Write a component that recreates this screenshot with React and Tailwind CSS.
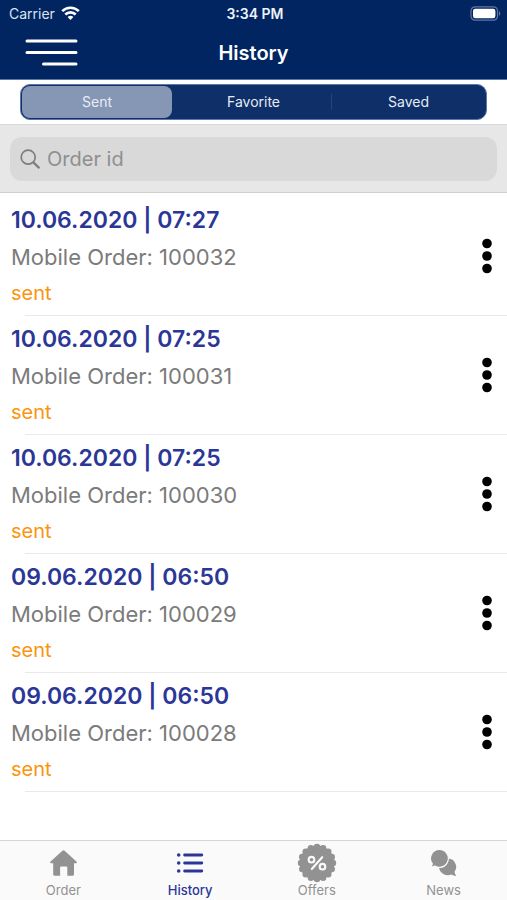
import React, { useState } from "react";

const orders = [
  { id: "100032", date: "10.06.2020", time: "07:27" },
  { id: "100031", date: "10.06.2020", time: "07:25" },
  { id: "100030", date: "10.06.2020", time: "07:25" },
  { id: "100029", date: "09.06.2020", time: "06:50" },
  { id: "100028", date: "09.06.2020", time: "06:50" },
];

function WifiIcon() {
  return (
    <svg className="h-[15px] w-[19px]" viewBox="0 0 19 15" fill="none" stroke="white" strokeWidth="2.6" aria-hidden="true">
      <path d="M1.2 5.2a11.8 11.8 0 0 1 16.6 0" />
      <path d="M4.3 8.5a7.4 7.4 0 0 1 10.4 0" />
      <path d="M9.5 14 6.6 11.1a4.1 4.1 0 0 1 5.8 0Z" fill="white" stroke="none" />
    </svg>
  );
}

function BatteryIcon() {
  return (
    <svg className="h-[15px] w-[31px]" viewBox="0 0 31 15" aria-label="Battery">
      <rect x="1" y="0.8" width="26.5" height="13.4" rx="4" fill="none" stroke="#6378a3" strokeWidth="1.2" />
      <rect x="3" y="2.8" width="22.4" height="9.4" rx="2.2" fill="white" />
      <path d="M29 5.2c1.7.6 1.7 4 0 4.6Z" fill="#6378a3" />
    </svg>
  );
}

function HomeIcon() {
  return (
    <svg className="h-[26px] w-[27px]" viewBox="0 0 27 26" fill="currentColor" aria-hidden="true">
      <path d="M12.4.8a1.600 1.600 0 0 1 2.200 0L26.400 11.600c.8.8.5 1.700-.5 1.700H24v10.900a1.500 1.500 0 0 1-1.500 1.500h-5.200V17.400a.9.9 0 0 0-.9-.9h-5.400a.9.9 0 0 0-.9.9v8.300H4.700a1.500 1.500 0 0 1-1.500-1.500V13.300H1.100c-1 0-1.300-.9-.5-1.700Z" />
    </svg>
  );
}

function ListIcon() {
  return (
    <svg className="h-[22px] w-[28px]" viewBox="0 0 28 22" aria-hidden="true">
      <g stroke="currentColor" strokeWidth="2.8" strokeLinecap="round">
        <path d="M8.600 3h17.200M8.600 11h17.200M8.600 19h17.200" />
      </g>
      <g fill="currentColor">
        <circle cx="2.700" cy="3" r="1.800" />
        <circle cx="2.700" cy="11" r="1.800" />
        <circle cx="2.700" cy="19" r="1.800" />
      </g>
    </svg>
  );
}

const scallops = Array.from({ length: 16 }, (_, i) => {
  const a = (i * Math.PI) / 8;
  return { x: 20 + 16 * Math.cos(a), y: 20 + 16 * Math.sin(a) };
});

function OffersIcon() {
  return (
    <svg className="h-10 w-10" viewBox="0 0 40 40" aria-hidden="true">
      <g fill="currentColor">
        <circle cx="20" cy="20" r="17.4" />
        {scallops.map((s, i) => (
          <circle key={i} cx={s.x} cy={s.y} r="3.2" />
        ))}
      </g>
      <g fill="none" stroke="#fafafa" strokeWidth="2.1" strokeLinecap="round">
        <circle cx="14.500" cy="16.700" r="2.800" />
        <circle cx="25.500" cy="23.700" r="2.800" />
        <path d="M25.200 14.200 14.800 26" />
      </g>
    </svg>
  );
}

function NewsIcon() {
  return (
    <svg className="h-[28px] w-[27px]" viewBox="0 0 27 28" fill="currentColor" aria-hidden="true">
      <path d="M18.2 9.6a8.4 8.4 0 0 1 6.3 13.4c.3 1.6 1 2.8 1.9 4-2-.1-3.6-.7-4.9-1.5a9 9 0 0 1-12.4-6.5c5.2.5 9-3.6 9.1-9.4Z" />
      <path
        d="M9.4.5a8.9 8.9 0 1 1-4.600 16.500C3.700 17.700 2.400 18 .7 18c.8-1 1.400-2 1.600-3.200A8.900 8.900 0 0 1 9.400.5Z"
        stroke="#fafafa"
        strokeWidth="1.2"
      />
    </svg>
  );
}

const tabs = [
  { label: "Order", Icon: HomeIcon },
  { label: "History", Icon: ListIcon },
  { label: "Offers", Icon: OffersIcon },
  { label: "News", Icon: NewsIcon },
];

function Segments() {
  const [active, setActive] = useState("Sent");
  return (
    <div className="border-b border-[#d8d8d8] bg-white px-5 pt-1 pb-1">
      <div className="grid h-9 grid-cols-3 rounded-[10px] border border-[#5d78a8] bg-[#0e2f68]">
        {["Sent", "Favorite", "Saved"].map((name) => (
          <button
            key={name}
            type="button"
            aria-pressed={active === name}
            onClick={() => setActive(name)}
            className={
              "text-sm text-[#e6ebf5] " +
              (active === name
                ? "my-px mr-1 ml-px rounded-lg bg-[#8697b6]"
                : name === "Saved"
                  ? "bg-[linear-gradient(#284577,#284577)] bg-[length:1px_16px] bg-[position:left_center] bg-no-repeat"
                  : "")
            }
          >
            {name}
          </button>
        ))}
      </div>
    </div>
  );
}

function OrderRow({ order }) {
  return (
    <li>
      <div className="flex h-[118px] items-center pr-2 pl-[11px]">
        <div className="min-w-0 flex-1">
          <h2 className="text-[23px] leading-[38px] font-semibold text-[#2b3797]">
            {order.date} | {order.time}
          </h2>
          <p className="text-[22px] leading-9 text-[#7b7b7b]">Mobile Order: {order.id}</p>
          <p className="text-xl leading-9 text-[#fb940e]">sent</p>
        </div>
        <button type="button" aria-label={"Options for order " + order.id} className="flex w-6 justify-center">
          <svg className="h-9 w-3" viewBox="0 0 12 36" fill="black" aria-hidden="true">
            <circle cx="6" cy="5.500" r="4.800" />
            <circle cx="6" cy="18" r="4.800" />
            <circle cx="6" cy="30.500" r="4.800" />
          </svg>
        </button>
      </div>
      <div className="ml-[25px] h-px bg-[#e9e9e9]" />
    </li>
  );
}

export default function App() {
  return (
    <div className="flex min-h-screen flex-col bg-white font-['Inter',sans-serif]">
      <header className="border-b border-[#5d78a8] bg-[#002561] text-white">
        <div className="grid h-[27px] grid-cols-3 items-center pr-[6px] pl-[9px] text-sm">
          <div className="flex items-center gap-[6px] text-[#dce3f0]">
            <span>Carrier</span>
            <WifiIcon />
          </div>
          <span className="text-center font-semibold text-[#eef2f8]">3:34 PM</span>
          <div className="flex justify-end">
            <BatteryIcon />
          </div>
        </div>
        <div className="grid h-[52px] grid-cols-3 items-center px-6">
          <button type="button" aria-label="Menu" className="w-14">
            <svg className="h-8 w-14" viewBox="0 0 56 32" fill="none" stroke="white" strokeWidth="3" strokeLinecap="round">
              <path d="M3 4h49M3 15.500h49M19.500 27H52" />
            </svg>
          </button>
          <h1 className="text-center text-xl font-semibold">History</h1>
        </div>
      </header>

      <Segments />

      <div className="border-b border-[#cfcfcf] bg-[#e7e7e7] px-[10px] pt-3 pb-[11px]">
        <div className="flex h-11 items-center gap-[7px] rounded-xl bg-[#d9d9d9] pl-[10px]">
          <svg className="h-5 w-5 shrink-0" viewBox="0 0 20 20" fill="none" stroke="#7d7d7d" strokeWidth="1.700" strokeLinecap="round" aria-hidden="true">
            <circle cx="8.200" cy="8.200" r="7" />
            <path d="m13.400 13.400 5.400 5.200" strokeWidth="2.200" />
          </svg>
          <input
            type="text"
            aria-label="Order id"
            placeholder="Order id"
            className="min-w-0 flex-1 bg-transparent text-xl text-gray-800 outline-none placeholder:text-[#8f8f8f]"
          />
        </div>
      </div>

      <main className="flex-1 pt-1">
        <ul>
          {orders.map((order) => (
            <OrderRow key={order.id} order={order} />
          ))}
        </ul>
      </main>

      <nav className="grid grid-cols-4 border-t border-[#d6d6d6] bg-[#fafafa]">
        {tabs.map(({ label, Icon }) => (
          <a
            key={label}
            href={"#" + label.toLowerCase()}
            aria-current={label === "History" ? "page" : undefined}
            className={
              "flex h-[59px] flex-col items-center pt-[2px] text-[13px] leading-[14px] " +
              (label === "History" ? "font-medium text-[#2b3797]" : "text-[#929292]")
            }
          >
            <span className="flex h-10 items-center">
              <Icon />
            </span>
            <span>{label}</span>
          </a>
        ))}
      </nav>
    </div>
  );
}
